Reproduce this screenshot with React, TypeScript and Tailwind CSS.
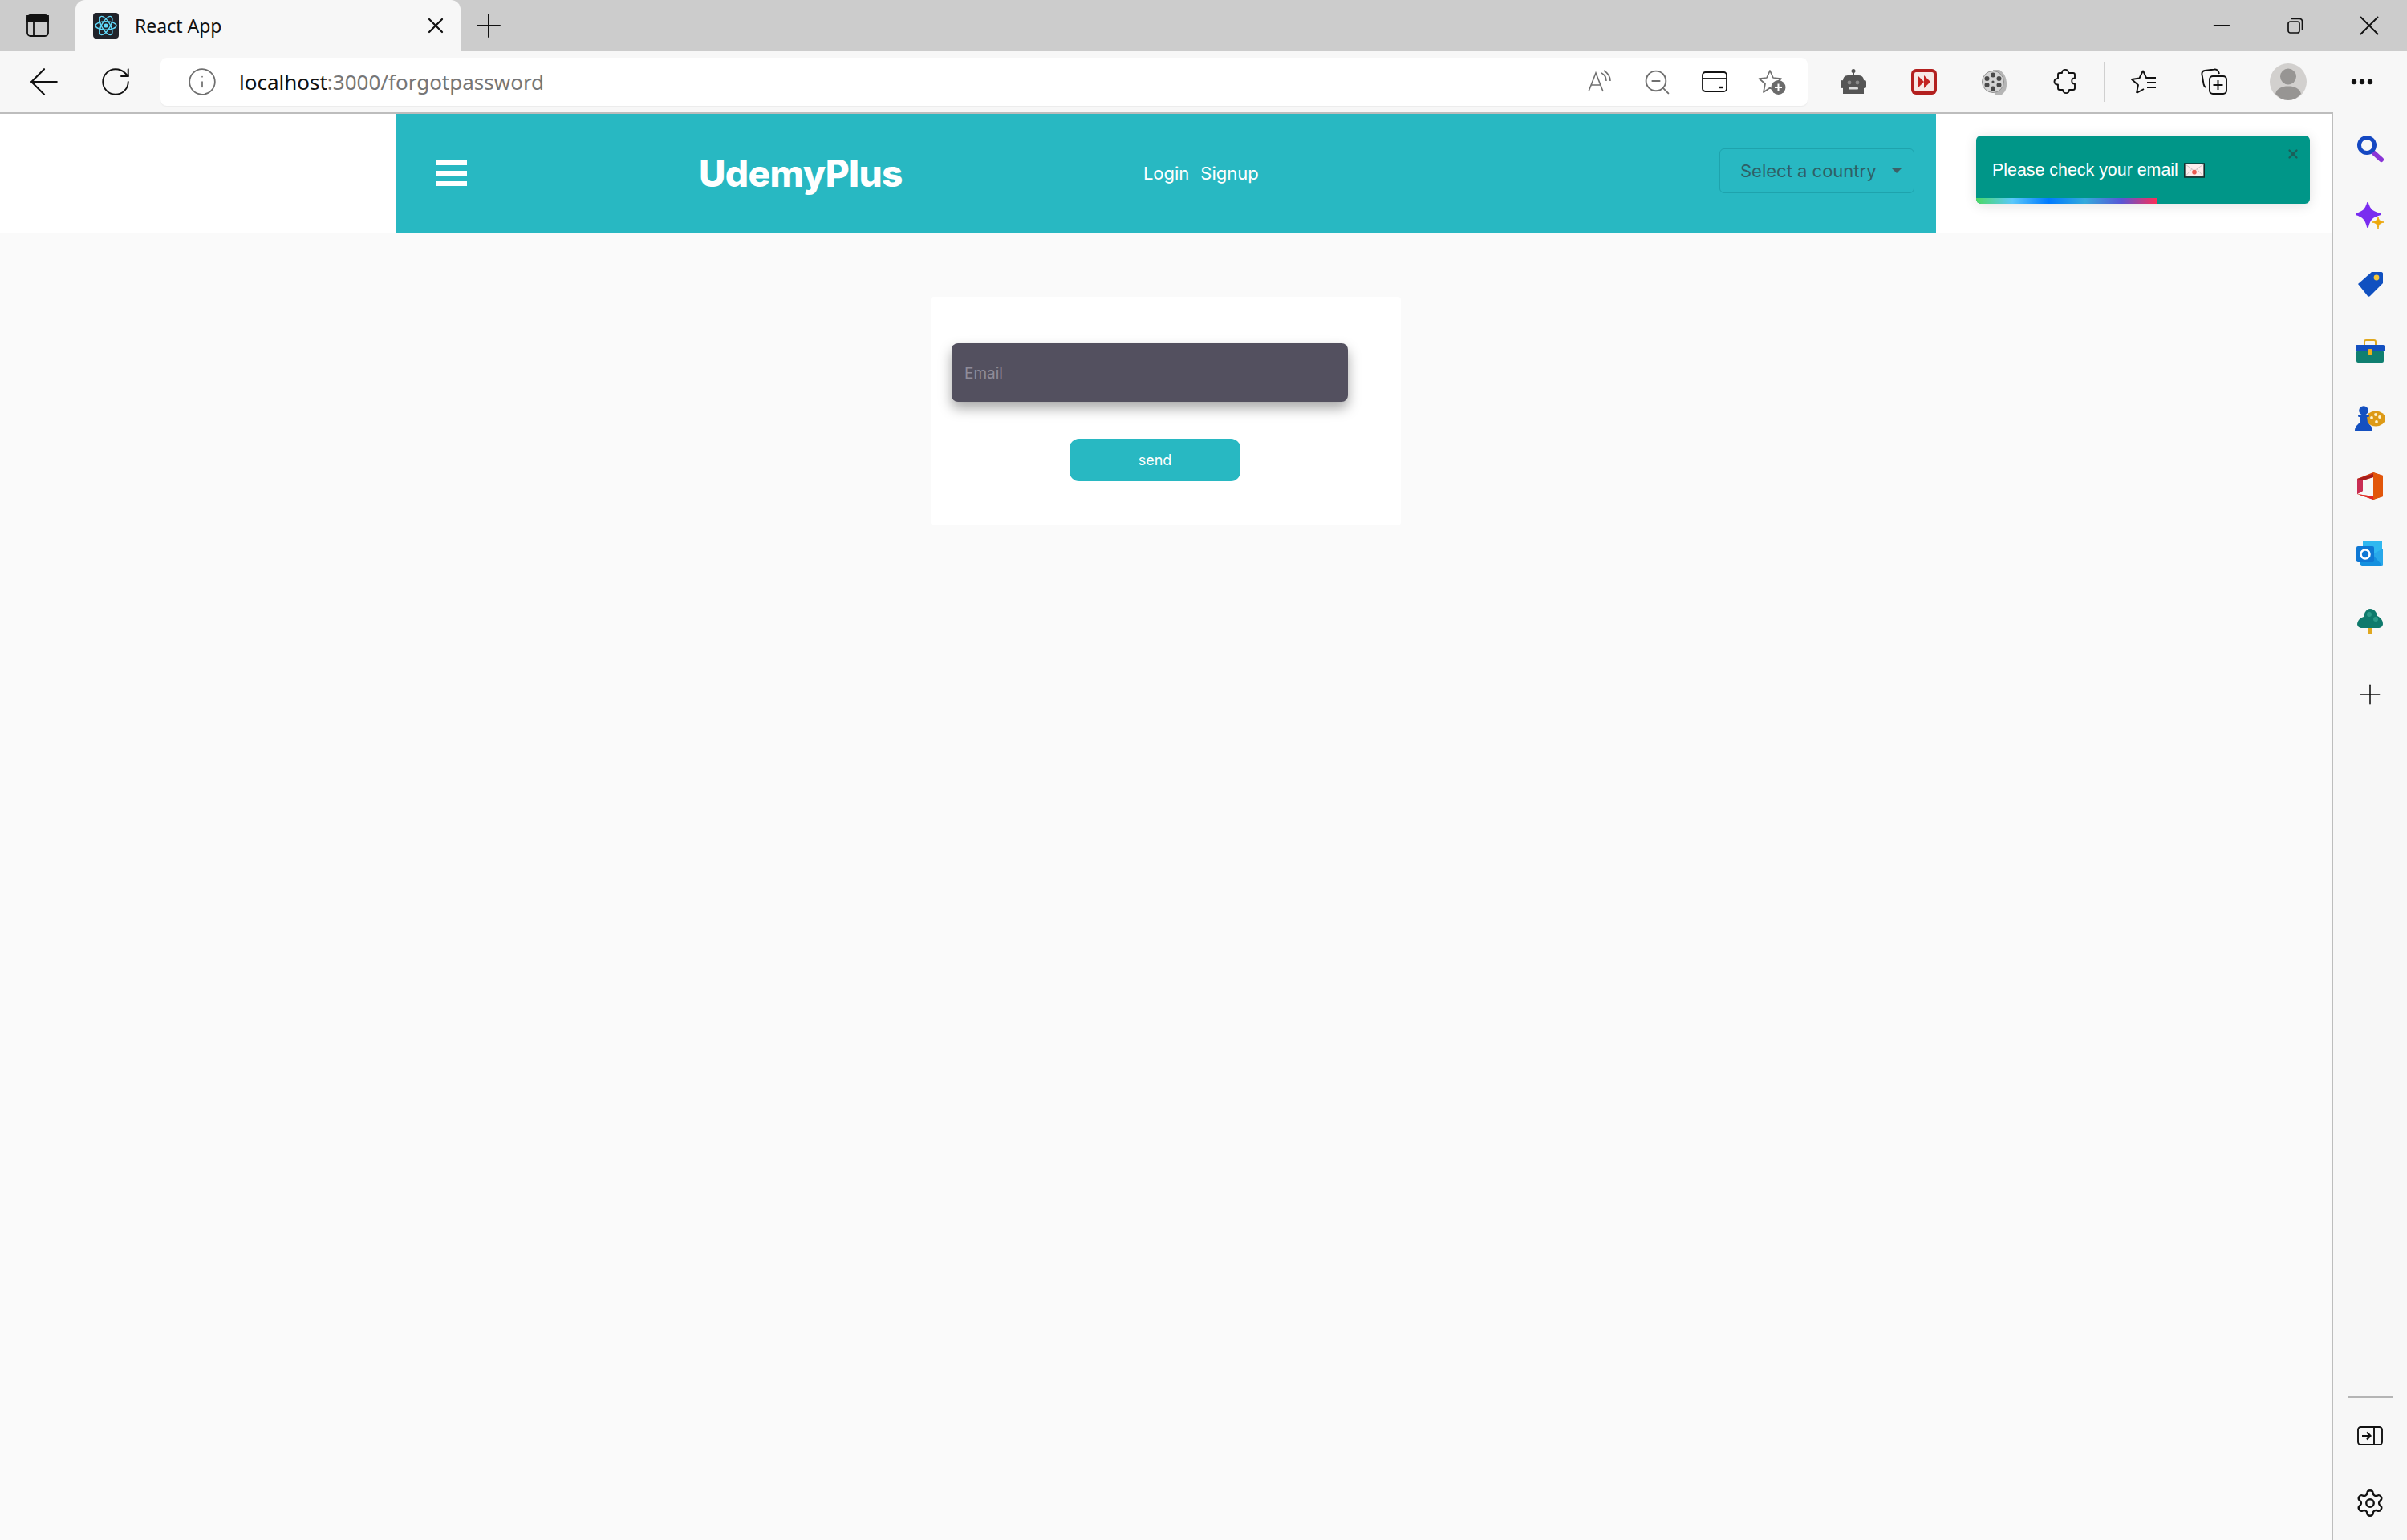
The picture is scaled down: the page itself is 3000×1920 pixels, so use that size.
import React from 'react';
import { X, Plus, Minus, ArrowLeft, RotateCw, Info, ZoomOut, Settings } from 'lucide-react';

const ReactFavicon = () => (
  <svg width="32" height="32" viewBox="0 0 32 32" className="shrink-0">
    <rect width="32" height="32" rx="4" fill="#20232a" />
    <g fill="none" stroke="#61dafb" strokeWidth="1.4">
      <ellipse cx="16" cy="16" rx="13" ry="5.2" />
      <ellipse cx="16" cy="16" rx="13" ry="5.2" transform="rotate(60 16 16)" />
      <ellipse cx="16" cy="16" rx="13" ry="5.2" transform="rotate(120 16 16)" />
    </g>
    <circle cx="16" cy="16" r="2.6" fill="#61dafb" />
  </svg>
);

const ReadAloud = () => (
  <svg width="32" height="32" viewBox="0 0 32 32" fill="none" stroke="#6f6f6f" strokeWidth="1.6">
    <path d="M3 28 L12 5 L21 28 M6.5 20 H17.5" />
    <path d="M19 5 C23 7 25 10 25 15 M22 2 C27 5 30 9 30 15" />
  </svg>
);

const CardIcon = () => (
  <svg width="32" height="28" viewBox="0 0 32 28" fill="none" stroke="#111" strokeWidth="1.8">
    <rect x="1" y="2" width="30" height="24" rx="3.5" />
    <path d="M1 10 H31" />
    <path d="M22 21 H27" strokeWidth="2.4" />
  </svg>
);

const FavAdd = () => (
  <svg width="36" height="34" viewBox="0 0 36 34" fill="none">
    <path d="M15 3 L19 12 L29 13 L21.5 19.5 L23.5 30 L15 24.5 L7 30 L9 19.5 L1.5 13 L11 12 Z" stroke="#6f6f6f" strokeWidth="1.7" strokeLinejoin="round" />
    <circle cx="25.5" cy="24" r="9" fill="#6b6b6b" />
    <path d="M25.5 19.5 V28.5 M21 24 H30" stroke="#fff" strokeWidth="2" />
  </svg>
);

const RobotIcon = () => (
  <svg width="32" height="34" viewBox="0 0 32 34">
    <circle cx="16" cy="3.5" r="2.5" fill="#555" />
    <rect x="15" y="4" width="2" height="6" fill="#555" />
    <rect x="0" y="15" width="4" height="10" rx="2" fill="#555" />
    <rect x="28" y="15" width="4" height="10" rx="2" fill="#555" />
    <path d="M9 9 H23 C27 9 29 12 29 16 V32 H3 V16 C3 12 5 9 9 9 Z" fill="#555" />
    <circle cx="11" cy="18" r="2.4" fill="#8a8a8a" />
    <circle cx="21" cy="18" r="2.4" fill="#8a8a8a" />
    <rect x="10" y="24" width="12" height="2.4" rx="1" fill="#ddd" />
  </svg>
);

const RedForward = () => (
  <svg width="32" height="32" viewBox="0 0 32 32">
    <rect width="32" height="32" rx="6" fill="#b3201f" />
    <rect x="4" y="4" width="24" height="24" rx="2" fill="#f7e9e6" />
    <path d="M8 8 L16 16 L8 24 Z M16 8 L24 16 L16 24 Z" fill="#c3221f" />
  </svg>
);

const FilmReel = () => (
  <svg width="32" height="34" viewBox="0 0 32 34">
    <path d="M14 2 H22 C28 6 31 12 31 20 C31 26 29 30 25 33 H16 Z" fill="#b5b5b5" />
    <circle cx="14" cy="17" r="13.5" fill="#d4d4d4" stroke="#8e8e8e" />
    <g fill="#4a4a4a">
      <circle cx="14" cy="8.5" r="3" />
      <circle cx="14" cy="25.5" r="3" />
      <circle cx="6.5" cy="13" r="3" />
      <circle cx="21.5" cy="13" r="3" />
      <circle cx="6.5" cy="21" r="3" />
      <circle cx="21.5" cy="21" r="3" />
      <circle cx="14" cy="17" r="1.6" />
    </g>
  </svg>
);

const Puzzle = () => (
  <svg width="30" height="34" viewBox="0 0 30 34" fill="none" stroke="#111" strokeWidth="1.9" strokeLinejoin="round">
    <path d="M11 6 C11 0.5 19 0.5 19 6 H25 C26.5 6 27 7 27 8 V12.5 C22 12 22 20 27 19.5 V25 C27 26.5 26 27 25 27 H20 C20.5 32.5 12 32.5 12 27 H8 C6.5 27 6 26 6 25 V20.5 C0 21 0 12.5 6 13 V8 C6 7 6.5 6 8 6 Z" />
  </svg>
);

const FavList = () => (
  <svg width="34" height="32" viewBox="0 0 34 32" fill="none" stroke="#111" strokeWidth="1.9" strokeLinejoin="round">
    <path d="M16 2 L20 11 H23 M8 30 L10 20 L2 13 L11.5 11.5 L16 2 M8 30 L17 25" />
    <path d="M21 11 H32 M21 17 H32 M21 23 H32" />
  </svg>
);

const Collections = () => (
  <svg width="34" height="34" viewBox="0 0 34 34" fill="none" stroke="#111" strokeWidth="1.9">
    <rect x="11" y="10" width="21" height="22" rx="4" />
    <path d="M21.5 15 V27 M15.5 21 H27.5" />
    <path d="M6 24 C4.5 23 4 22 3.6 20 L1.5 8 C1 5 2.5 3.5 5 3 L17 1.5 C20 1 22 3 23 7" />
  </svg>
);

const Avatar = () => (
  <svg width="46" height="46" viewBox="0 0 46 46">
    <circle cx="23" cy="23" r="23" fill="#d2d0ce" />
    <circle cx="23" cy="16.5" r="10" fill="#979593" />
    <path d="M7 38 C9 31 15 28.5 23 28.5 C31 28.5 37 31 39 38 C35 43 29 46 23 46 C17 46 11 43 7 38 Z" fill="#979593" />
  </svg>
);

const Dots = () => (
  <svg width="28" height="8" viewBox="0 0 28 8" fill="#111">
    <circle cx="4" cy="4" r="3.2" />
    <circle cx="14" cy="4" r="3.2" />
    <circle cx="24" cy="4" r="3.2" />
  </svg>
);

const RestoreIcon = () => (
  <svg width="22" height="22" viewBox="0 0 22 22" fill="none" stroke="#111" strokeWidth="1.7">
    <rect x="2" y="6" width="14" height="14" rx="2.5" />
    <path d="M6 2.5 H16 C18.5 2.5 19.5 3.5 19.5 6 V16" />
  </svg>
);

const TabsIcon = () => (
  <svg width="28" height="28" viewBox="0 0 28 28" fill="none" stroke="#111" strokeWidth="1.8">
    <rect x="1" y="1" width="26" height="26" rx="4" />
    <path d="M1 2 H27 V8 H1 Z" fill="#111" />
    <path d="M9 8 V27" />
  </svg>
);

const SearchGem = () => (
  <svg width="34" height="34" viewBox="0 0 34 34" fill="none">
    <path d="M21 21 L31 30" stroke="#8a35d6" strokeWidth="6" strokeLinecap="round" />
    <circle cx="13" cy="12" r="9.5" stroke="#1548c2" strokeWidth="5" />
  </svg>
);

const SparkleGem = () => (
  <svg width="36" height="36" viewBox="0 0 36 36">
    <path d="M15 1 C17 9 20 12 31 15 C20 18 17 22 15 31 C13 22 10 18 0 15 C10 12 13 9 15 1 Z" fill="#7a2df0" stroke="#7a2df0" strokeWidth="2" strokeLinejoin="round" />
    <path d="M28 18 C28.5 22 30 24 35 25 C30 26 28.5 28 28 33 C27.5 28 26 26 21 25 C26 24 27.5 22 28 18 Z" fill="#eda80c" stroke="#eda80c" strokeLinejoin="round" />
  </svg>
);

const TagGem = () => (
  <svg width="34" height="34" viewBox="0 0 34 34">
    <path d="M2 17 L19 2 H31 C32.5 2 33 3 33 4 V16 L17 32 C16 33 15 33 14 32 Z" fill="#1050c0" />
    <circle cx="25" cy="9" r="3.4" fill="#f3c63a" />
  </svg>
);

const ToolboxGem = () => (
  <svg width="36" height="30" viewBox="0 0 36 30">
    <path d="M11 8 V3 C11 2 12 1 13 1 H23 C24 1 25 2 25 3 V8" fill="none" stroke="#e0a820" strokeWidth="2" />
    <rect x="1" y="14" width="34" height="15" rx="2" fill="#0f7f70" />
    <rect x="0" y="7" width="36" height="8" rx="1.5" fill="#1450c0" />
    <rect x="15" y="12" width="6" height="7" rx="1.5" fill="#eeb01c" />
  </svg>
);

const ChessGem = () => (
  <svg width="38" height="32" viewBox="0 0 38 32">
    <ellipse cx="26" cy="16" rx="12" ry="9.5" fill="#dd9a16" />
    <g fill="#fff3d0">
      <circle cx="21" cy="15" r="1.9" />
      <circle cx="26" cy="11" r="1.9" />
      <circle cx="31" cy="14" r="1.9" />
      <circle cx="27" cy="20" r="1.9" />
    </g>
    <circle cx="11" cy="6" r="5.8" fill="#1450c0" />
    <rect x="4" y="11" width="14" height="3" rx="1.5" fill="#1450c0" />
    <path d="M7 13 H15 L16 21 C19 24 22 26 22 31 H0 C0 26 3 24 6 21 Z" fill="#1450c0" />
  </svg>
);

const OfficeGem = () => (
  <svg width="34" height="36" viewBox="0 0 34 36">
    <path d="M1 9 L21 1 L33 5 V31 L21 35 L1 28 L21 31 V7 L8 11 V24 L1 28 Z" fill="#d13a12" />
    <path d="M21 1 L33 5 V31 L21 35 Z" fill="#e2560a" />
    <path d="M1 9 L8 11 V24 L1 28 Z" fill="#c92e55" />
    <path d="M8 11 L21 7 V3 L1 9 Z" fill="#a81c1c" />
    <path d="M1 28 L21 31 V35 Z" fill="#e02a2a" />
  </svg>
);

const OutlookGem = () => (
  <svg width="34" height="32" viewBox="0 0 34 32">
    <path d="M8 1 H32 V16 H8 Z" fill="#30b8f0" />
    <path d="M5 15 L33 15 V30 C33 31 32 32 31 32 H7 C6 32 5 31 5 30 Z" fill="#1490df" />
    <path d="M20 17 L33 10 V17 L33 32 Z" fill="#28a8ea" />
    <rect x="0" y="7" width="22" height="20" rx="2" fill="#0f78d4" />
    <circle cx="11" cy="17" r="5.5" fill="none" stroke="#fff" strokeWidth="2.6" />
  </svg>
);

const TreeGem = () => (
  <svg width="34" height="34" viewBox="0 0 34 34">
    <rect x="14" y="24" width="6" height="9" fill="#e0a820" />
    <path d="M1 21 C2 15 6 13 9 12 C10 5 14 2 17 2 C21 2 25 5 26 11 C30 13 33 16 33 21 C33 24 30 26 27 26 H7 C4 26 1 24 1 21 Z" fill="#0f7a6c" />
    <circle cx="16" cy="9" r="3" fill="#2c9a88" />
    <circle cx="24" cy="15" r="3" fill="#2c9a88" />
  </svg>
);

const PanelArrow = () => (
  <svg width="32" height="24" viewBox="0 0 32 24" fill="none" stroke="#111" strokeWidth="1.9">
    <rect x="1" y="1" width="30" height="22" rx="3.5" />
    <path d="M21 1 V23" />
    <path d="M6 12 H16 M12 7.5 L16.5 12 L12 16.5" strokeWidth="2.2" />
  </svg>
);

const Envelope = () => (
  <svg width="26" height="19" viewBox="0 0 24 17" className="ml-[7px] shrink-0">
    <rect x="0.75" y="0.75" width="22.5" height="15.5" fill="#fbeeee" stroke="#122b2a" strokeWidth="1.5" />
    <path d="M1.5 1.5 L12 9 L22.5 1.5 M1.5 15.5 L9 7 M22.5 15.5 L15 7" fill="none" stroke="#c9c2c2" strokeWidth="0.8" />
    <circle cx="12" cy="10.5" r="2.6" fill="#ea5a50" />
  </svg>
);

const toolCell = 'w-[88px] h-[50px] flex items-center justify-center shrink-0';
const addrCell = 'w-[72px] h-[50px] flex items-center justify-center shrink-0';
const sideCell = 'h-[84px] flex items-center justify-center shrink-0';

export default function App() {
  return (
    <div className="w-[3000px] h-[1920px] flex flex-col overflow-hidden bg-[#f7f7f7] font-['Noto_Sans',sans-serif]">
      {/* Title bar */}
      <div className="h-[64px] bg-[#cccccc] flex items-end shrink-0">
        <div className="w-[94px] h-[64px] flex items-center justify-center">
          <TabsIcon />
        </div>
        <div className="w-[480px] h-[64px] bg-[#f7f7f7] rounded-t-[12px] flex items-center pl-[22px]">
          <ReactFavicon />
          <span className="ml-[20px] text-[23px] text-[#111]">React App</span>
          <X className="ml-auto mr-[15px]" size={32} strokeWidth={1.7} color="#111" />
        </div>
        <div className="h-[64px] ml-[11px] flex items-center">
          <Plus size={48} strokeWidth={1} color="#111" />
        </div>
        <div className="h-[64px] flex items-center ml-auto">
          <div className="w-[92px] flex justify-center">
            <Minus size={32} strokeWidth={1.5} color="#111" />
          </div>
          <div className="w-[92px] flex justify-center">
            <RestoreIcon />
          </div>
          <div className="w-[92px] flex justify-center mr-[1px]">
            <X size={42} strokeWidth={1.1} color="#111" />
          </div>
        </div>
      </div>

      {/* Toolbar */}
      <div className="h-[76px] flex items-center shrink-0">
        <div className="w-[200px] flex items-center shrink-0">
          <div className="w-[110px] flex justify-center">
            <ArrowLeft size={54} strokeWidth={0.95} color="#111" />
          </div>
          <div className="w-[68px] flex justify-center">
            <RotateCw size={42} strokeWidth={1.1} color="#111" />
          </div>
        </div>
        <div className="w-[2053px] h-[60px] bg-white rounded-[8px] flex items-center pl-[33px] pr-[8px] shrink-0 shadow-[0_1px_2px_rgba(0,0,0,0.06)]">
          <Info size={38} strokeWidth={1.1} color="#6f6f6f" />
          <span className="ml-[27px] text-[26px] text-[#111]">
            localhost<span className="text-[#767676]">:3000/forgotpassword</span>
          </span>
          <div className="ml-auto flex items-center">
            <div className={addrCell}><ReadAloud /></div>
            <div className={addrCell}><ZoomOut size={37} strokeWidth={1.25} color="#6f6f6f" /></div>
            <div className={addrCell}><CardIcon /></div>
            <div className={addrCell}><FavAdd /></div>
          </div>
        </div>
        <div className="ml-[13px] flex items-center">
          <div className={toolCell}><RobotIcon /></div>
          <div className={toolCell}><RedForward /></div>
          <div className={toolCell}><FilmReel /></div>
          <div className={toolCell}><Puzzle /></div>
          <div className="w-[10px] h-[50px] flex justify-center shrink-0">
            <div className="w-[2px] h-[50px] bg-[#d0d0d0]" />
          </div>
          <div className={toolCell}><FavList /></div>
          <div className={toolCell}><Collections /></div>
          <div className={`${toolCell} ml-[4px]`}><Avatar /></div>
          <div className={`${toolCell} ml-[4px]`}><Dots /></div>
        </div>
      </div>

      <div className="flex-1 flex min-h-0">
        {/* Page */}
        <div className="w-[2908px] shrink-0 bg-[#fafafa] border-t-2 border-r-2 border-[#bdbdbd] relative font-['Inter',sans-serif]">
          <div className="h-[148px] bg-white pl-[493px]">
            <div className="w-[1920px] h-[148px] bg-[#28b8c2] flex items-center relative">
              <div className="ml-[51px] w-[38px] flex flex-col gap-[7px]">
                <div className="h-[6px] bg-white" />
                <div className="h-[6px] bg-white" />
                <div className="h-[6px] bg-white" />
              </div>
              <span className="ml-[289px] text-[46px] leading-none font-extrabold text-white tracking-[-0.6px]">UdemyPlus</span>
              <div className="ml-[300px] flex items-center gap-[14px] text-[22px] text-white">
                <span>Login</span>
                <span>Signup</span>
              </div>
              <div className="ml-auto mr-[27px] mb-[6px] w-[243px] h-[56px] border border-[#1ea3ad] rounded-[6px] flex items-center pl-[25px] text-[22px] text-[#2f5f66]">
                <span>Select a country</span>
                <div className="ml-[19px] w-0 h-0 border-x-[6px] border-x-transparent border-t-[6px] border-t-[#3d5f66]" />
              </div>
            </div>
          </div>

          <div className="mx-auto mt-[80px] w-[586px] h-[285px] bg-white rounded-[4px] pl-[26px] pt-[58px]">
            <input
              placeholder="Email"
              className="block w-[494px] h-[73px] rounded-[8px] bg-[#53505f] pl-[16px] pt-[2px] text-[19px] text-white placeholder:text-[#8f8c99] outline-none shadow-[0_8px_16px_rgba(0,0,0,0.35)]"
            />
            <button className="block ml-[147px] mt-[46px] w-[213px] h-[53px] rounded-[12px] bg-[#28b8c2] text-[18px] text-white">
              send
            </button>
          </div>

          {/* Toast */}
          <div className="absolute left-[2463px] top-[27px] w-[416px] h-[85px] rounded-[6px] bg-[#009688] shadow-[0_2px_16px_rgba(0,0,0,0.12)] overflow-hidden font-['Liberation_Sans',sans-serif]">
            <div className="h-[85px] pl-[20px] pt-[1px] flex items-center text-[21.4px] text-white">
              <span>Please check your email</span>
              <Envelope />
            </div>
            <X className="absolute right-[12px] top-[14px]" size={18} strokeWidth={3} color="#1c5f59" />
            <div className="absolute left-0 bottom-0 w-[226px] h-[7px] bg-[linear-gradient(to_right,#4cd964,#5ac8fa,#007aff,#34aadc,#5856d6,#ff2d55)]" />
          </div>
        </div>

        {/* Edge sidebar */}
        <div className="flex-1 flex flex-col items-center pt-[4px]">
          <div className={sideCell}><SearchGem /></div>
          <div className={sideCell}><SparkleGem /></div>
          <div className={sideCell}><TagGem /></div>
          <div className={sideCell}><ToolboxGem /></div>
          <div className={sideCell}><ChessGem /></div>
          <div className={sideCell}><OfficeGem /></div>
          <div className={sideCell}><OutlookGem /></div>
          <div className={sideCell}><TreeGem /></div>
          <div className={`${sideCell} mt-[8px]`}><Plus size={40} strokeWidth={0.95} color="#111" /></div>
          <div className="mt-auto w-[56px] h-[2px] bg-[#b5b5b5]" />
          <div className="h-[84px] flex items-center justify-center mt-[5px]"><PanelArrow /></div>
          <div className="h-[84px] mb-[4px] flex items-center justify-center"><Settings size={38} strokeWidth={1.5} color="#111" /></div>
        </div>
      </div>
    </div>
  );
}
